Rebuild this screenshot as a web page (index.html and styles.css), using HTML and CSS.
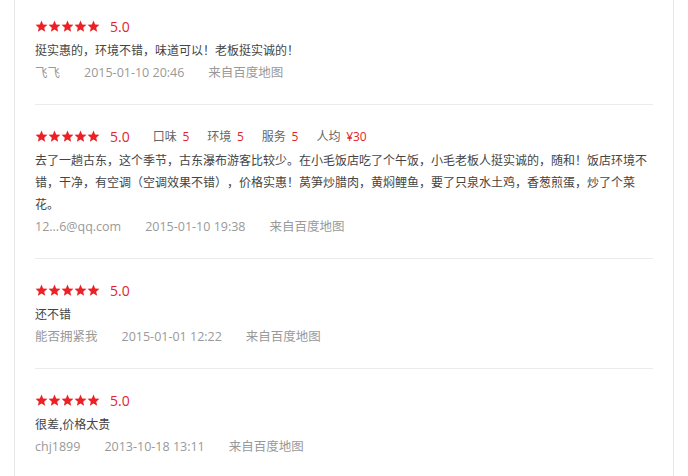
FILE: index.html
```html
<!DOCTYPE html>
<html lang="zh-CN">

<head>
    <meta charset="utf-8">
    <title>评论</title>
    <link rel="stylesheet" href="styles.css">
</head>

<body>
    <svg width="0" height="0" class="defs">
        <symbol id="star" viewBox="0 0 24 24">
            <polygon points="12,1 15.06,8.29 22.94,8.95 16.95,14.11 18.76,21.8 12,17.7 5.24,21.8 7.05,14.11 1.06,8.95 8.94,8.29" />
        </symbol>
    </svg>
    <div class="panel">
        <div class="review">
            <div class="rating">
                <span class="stars">
                    <svg><use href="#star" /></svg><svg><use href="#star" /></svg><svg><use href="#star" /></svg><svg><use href="#star" /></svg><svg><use href="#star" /></svg>
                </span>
                <span class="score">5.0</span>
            </div>
            <p class="text">挺实惠的，环境不错，味道可以！老板挺实诚的！</p>
            <div class="meta">
                <span>飞飞</span>
                <span>2015-01-10 20:46</span>
                <span>来自百度地图</span>
            </div>
        </div>

        <div class="review">
            <div class="rating">
                <span class="stars">
                    <svg><use href="#star" /></svg><svg><use href="#star" /></svg><svg><use href="#star" /></svg><svg><use href="#star" /></svg><svg><use href="#star" /></svg>
                </span>
                <span class="score">5.0</span>
                <span class="detail">口味 <em>5</em></span>
                <span class="detail">环境 <em>5</em></span>
                <span class="detail">服务 <em>5</em></span>
                <span class="detail">人均 <em>¥30</em></span>
            </div>
            <p class="text">去了一趟古东，这个季节，古东瀑布游客比较少。在小毛饭店吃了个午饭，小毛老板人挺实诚的，随和！饭店环境不错，干净，有空调（空调效果不错），价格实惠！莴笋炒腊肉，黄焖鲤鱼，要了只泉水土鸡，香葱煎蛋，炒了个菜花。</p>
            <div class="meta">
                <span>12...6@qq.com</span>
                <span>2015-01-10 19:38</span>
                <span>来自百度地图</span>
            </div>
        </div>

        <div class="review">
            <div class="rating">
                <span class="stars">
                    <svg><use href="#star" /></svg><svg><use href="#star" /></svg><svg><use href="#star" /></svg><svg><use href="#star" /></svg><svg><use href="#star" /></svg>
                </span>
                <span class="score">5.0</span>
            </div>
            <p class="text">还不错</p>
            <div class="meta">
                <span>能否拥紧我</span>
                <span>2015-01-01 12:22</span>
                <span>来自百度地图</span>
            </div>
        </div>

        <div class="review">
            <div class="rating">
                <span class="stars">
                    <svg><use href="#star" /></svg><svg><use href="#star" /></svg><svg><use href="#star" /></svg><svg><use href="#star" /></svg><svg><use href="#star" /></svg>
                </span>
                <span class="score">5.0</span>
            </div>
            <p class="text">很差,价格太贵</p>
            <div class="meta">
                <span>chj1899</span>
                <span>2013-10-18 13:11</span>
                <span>来自百度地图</span>
            </div>
        </div>
    </div>
</body>

</html>
```

FILE: styles.css
```css
body {
    margin: 0;
    font-family: 'Noto Sans CJK SC', sans-serif;
    font-size: 12px;
    color: #444;
    background: #fff;
    overflow: hidden;
    text-spacing-trim: space-all;
}

.defs {
    position: absolute;
}

.panel {
    margin-left: 14px;
    width: 618px;
    min-height: 476px;
    padding: 0 20px;
    border-left: 1px solid #e6e6e6;
    border-right: 1px solid #e6e6e6;
}

.review {
    padding: 18px 0 19px;
    border-bottom: 1px solid #ececec;
}

.review:first-child {
    padding-top: 13px;
}

.review:last-child {
    border-bottom: none;
}

.rating {
    display: flex;
    align-items: center;
    height: 26px;
}

.stars {
    display: flex;
}

.stars svg {
    width: 13px;
    height: 13px;
    fill: #ec2125;
}

.score {
    margin-left: 10px;
    font-family: 'Open Sans', 'Noto Sans CJK SC', sans-serif;
    font-size: 14px;
    color: #e4242b;
}

.detail {
    margin-left: 18px;
    color: #666;
}

.score + .detail {
    margin-left: 23px;
}

.detail em {
    font-family: 'Open Sans', sans-serif;
    font-style: normal;
    color: #e4242b;
    margin-left: 3px;
}

.text {
    margin: 0;
    line-height: 22px;
}

.meta {
    display: flex;
    gap: 24px;
    line-height: 24px;
    color: #999;
    font-family: 'Open Sans', 'Noto Sans CJK SC', sans-serif;
    font-size: 12.5px;
}
```
